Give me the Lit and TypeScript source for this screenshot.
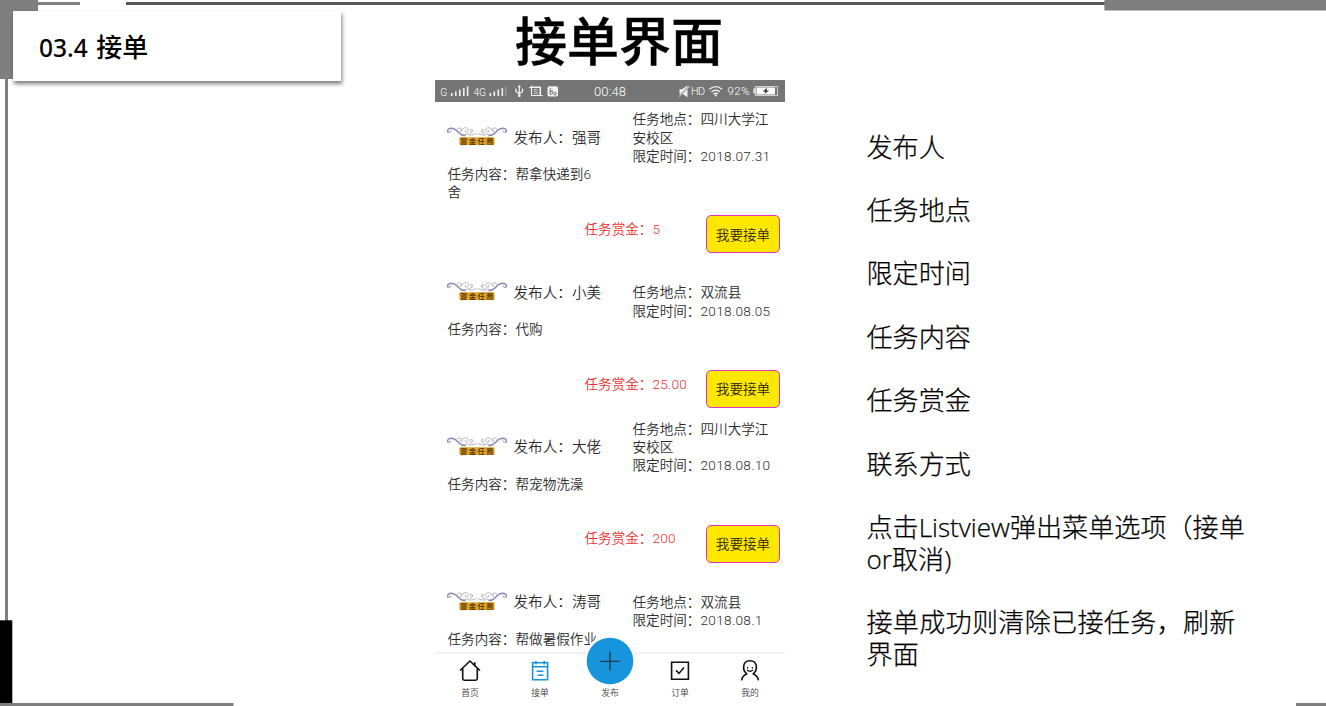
import { LitElement, html, css, svg } from "lit";
import { customElement, property } from "lit/decorators.js";

interface Task {
  publisher: string;
  place: string;
  deadline: string;
  content: string;
  reward: string;
}

const TASKS: Task[] = [
  { publisher: "强哥", place: "四川大学江安校区", deadline: "2018.07.31", content: "帮拿快递到6舍", reward: "5" },
  { publisher: "小美", place: "双流县", deadline: "2018.08.05", content: "代购", reward: "25.00" },
  { publisher: "大佬", place: "四川大学江安校区", deadline: "2018.08.10", content: "帮宠物洗澡", reward: "200" },
  { publisher: "涛哥", place: "双流县", deadline: "2018.08.1", content: "帮做暑假作业", reward: "" },
];

const NOTES = [
  "发布人",
  "任务地点",
  "限定时间",
  "任务内容",
  "任务赏金",
  "联系方式",
  "点击Listview弹出菜单选项（接单or取消)",
  "接单成功则清除已接任务，刷新界面",
];

@customElement("status-bar")
class StatusBar extends LitElement {
  static styles = css`
    :host { display: block; height: 22px; background: #757575; }
    svg { display: block; }
    text { font-family: Roboto, sans-serif; font-weight: 350; fill: #fff; }
  `;
  render() {
    return html`<svg width="350" height="22" viewBox="0 0 350 22">
      <text x="5.2" y="16" font-size="10.2">G</text>
      <g fill="#f0f0f0">
        <rect x="16" y="13" width="1.6" height="3" /><rect x="20" y="11.5" width="1.6" height="4.5" />
        <rect x="24" y="9.5" width="1.6" height="6.5" /><rect x="28" y="8" width="1.6" height="8" />
        <rect x="31.8" y="6.3" width="1.6" height="9.7" />
        <rect x="54.5" y="13" width="1.6" height="3" /><rect x="58.5" y="11.5" width="1.6" height="4.5" />
        <rect x="62.5" y="9.5" width="1.6" height="6.5" /><rect x="66.5" y="8" width="1.6" height="8" />
        <rect x="70.2" y="6.3" width="1.2" height="9.7" opacity=".35" />
      </g>
      <text x="38.5" y="16" font-size="10.2" textLength="12.6">4G</text>
      <g stroke="#f4f4f4" fill="none" stroke-width="1.2">
        <path d="M84.3 6V16M81 8.5v3.2l3.3 1.8 3.2-1.8V8.5" />
        <path d="M94 7.5h11.5v8M96.5 5.5v10h11M97 7h8v8" stroke-width="1.1" />
      </g>
      <circle cx="84.3" cy="15.7" r="1.4" fill="#f4f4f4" />
      <path d="M82.6 7.2l1.7-2.5 1.7 2.5z" fill="#f4f4f4" />
      <text x="98.6" y="13.8" font-size="7.5" font-weight="700">S</text>
      <rect x="112.5" y="6.3" width="10.5" height="10.3" rx="1.8" fill="#f4f4f4" />
      <path d="M115.3 7.7v4.5M117.2 9.7v2" stroke="#757575" stroke-width="1" />
      <g stroke="#757575" fill="none" stroke-width="1"><circle cx="116" cy="12.8" r="1.5" /><circle cx="120" cy="13.6" r="1.4" /></g>
      <text x="159" y="15.9" font-size="13" textLength="32">00:48</text>
      <path d="M244.5 9.2h2.5l5.5-3.6v11.6l-5-3.3h-3z" fill="#f0f0f0" />
      <path d="M243.5 17L255 5.4" stroke="#757575" stroke-width="1.6" />
      <path d="M244 16.5L254.5 6" stroke="#f4f4f4" stroke-width="1" />
      <text x="256" y="15.4" font-size="10.8" textLength="14">HD</text>
      <g fill="none" stroke="#f4f4f4" stroke-width="1.3">
        <path d="M274.3 9.3q6.4-5.2 12.8 0M276.5 11.8q4.2-3.5 8.4 0M278.4 14q2.3-1.8 4.6 0" />
      </g>
      <circle cx="280.7" cy="15.3" r="1.1" fill="#f4f4f4" />
      <text x="292.5" y="15.4" font-size="11.4" textLength="22">92%</text>
      <path d="M319.8 7.3q-3.2 3.7 0 7.4z" fill="#f4f4f4" />
      <rect x="320.5" y="6.5" width="22" height="9" fill="none" stroke="#cfcfcf" />
      <rect x="321.5" y="7.5" width="18.5" height="7" fill="#fff" />
      <path d="M332 7.8l-4.3 3.6h2.6l-.8 2.6 4.6-3.6h-2.7z" fill="#333" />
    </svg>`;
  }
}

@customElement("bounty-badge")
class BountyBadge extends LitElement {
  static styles = css`
    :host { display: block; width: 60px; height: 22px; }
    svg { display: block; }
    text { font-family: "Noto Sans CJK TC", sans-serif; font-weight: 500; fill: #56310a; }
  `;
  render() {
    const half = svg`
      <path d="M1 7.5Q-.2 3.5 4 3.2Q8 3.4 11.5 7.4Q14.5 10.5 18.5 10.8" fill="none" stroke="#8d87b8" stroke-width="1.5" />
      <path d="M1.3 7.3q2.6.7 2.8-1.7" fill="none" stroke="#9992bd" stroke-width="1" />
      <path d="M9 5.5q2-4 5-2.2q2.2 2.5-1 3.3M12 8q6-8 9-4.2q1.5 3.4-2.2 3.4q-1.8-1.7.4-2.4M17 9.5q6 .5 8.5-2.8q.6-2.8-1.6-2.4q-1.5 1.7.7 2.3M22 10.2q4-.2 7.5-1.6" fill="none" stroke="#b9b6bf" stroke-width=".95" />`;
    return html`<svg width="60" height="22" viewBox="0 0 60 22">
      ${half}
      <g transform="translate(60 0) scale(-1 1)">${half}</g>
      <rect x="12.3" y="12.3" width="35.2" height="7.6" rx=".8" fill="#dda523" />
      <text x="13" y="18.9" font-size="7.4" textLength="33.6">賞金任務</text>
    </svg>`;
  }
}

@customElement("task-row")
class TaskRow extends LitElement {
  @property({ attribute: false }) task!: Task;
  static styles = css`
    :host { display: block; height: 154.8px; box-sizing: border-box; padding: 8.4px 4px 0 12px; }
    .top { display: flex; height: 55px; }
    .badge { margin: 15.1px 0 0 0.4px; }
    .publisher { margin: 18.4px 0 0 6.1px; width: 119px; font-size: 14.6px; line-height: 18px; }
    .details { width: 143px; line-height: 18.2px; }
    .place { display: flex; flex-direction: column; justify-content: flex-end; height: 36.4px; }
    .num { letter-spacing: 0.32px; }
    .content { width: 150px; height: 36px; padding-left: 0.5px; line-height: 18px; }
    .actions { display: flex; justify-content: flex-end; margin-top: 13.7px; line-height: 18px; }
    .reward { width: 121.5px; padding-top: 4.7px; color: #ee3030; }
    .amount { letter-spacing: 0.2px; }
    button {
      box-sizing: border-box; width: 74px; height: 38px; padding: 1px 0 0; margin-right: 1px;
      border: 1.4px solid #e733c0; border-radius: 5px; background: #ffe800;
      font: inherit; color: #2b2610; white-space: nowrap;
    }
  `;
  render() {
    const t = this.task;
    return html`
      <div class="top">
        <bounty-badge class="badge"></bounty-badge>
        <div class="publisher">发布人：${t.publisher}</div>
        <div class="details">
          <div class="place"><span>任务地点：${t.place}</span></div>
          <div>限定时间：<span class="num">${t.deadline}</span></div>
        </div>
      </div>
      <div class="content">任务内容：${t.content}</div>
      ${t.reward
        ? html`<div class="actions">
            <div class="reward">任务赏金：<span class="amount">${t.reward}</span></div>
            <button>我要接单</button>
          </div>`
        : null}
    `;
  }
}

@customElement("tab-bar")
class TabBar extends LitElement {
  static styles = css`
    :host { display: grid; grid-template-columns: repeat(5, 70px); height: 53px; background: #fff; border-top: 1px solid #f0f0f0; box-shadow: 0 -1px 1px #f3f3f3; box-sizing: border-box; }
    .tab { display: flex; flex-direction: column; align-items: center; padding-top: 5px; font-size: 8.8px; line-height: 12px; color: #444; }
    svg { display: block; width: 24px; height: 24px; margin-bottom: 4.4px; fill: none; stroke: #111; stroke-width: 1.6; }
    .blue { stroke: #1795dc; }
    .plus { position: relative; }
    .fab { position: absolute; top: -21px; left: 8px; width: 54px; height: 54px; margin: 0; }
    .spacer { height: 28.4px; }
  `;
  render() {
    return html`
      <div class="tab">
        <svg viewBox="0 0 24 24"><path d="M2 11.5L12 2L16.8 6.6M22 11.5L16.8 6.6V3.3M4.7 9.5V19.6Q4.7 21.2 6.3 21.2H17.7Q19.3 21.2 19.3 19.6V9.5" /></svg>
        <span>首页</span>
      </div>
      <div class="tab">
        <svg class="blue" viewBox="0 0 24 24"><path d="M4.6 3.8H19.6V20.8H4.6zM4.6 7.8H19.6M8 2V5.5M16.2 2V5.5M8.6 12.2H15.5M9.6 16.2H15.5" /></svg>
        <span>接单</span>
      </div>
      <div class="tab plus">
        <svg class="fab" viewBox="0 0 54 54">
          <circle cx="27" cy="28" r="26" fill="#fff" stroke="none" />
          <circle cx="27" cy="28" r="23.3" fill="#1795dc" stroke="none" />
          <path d="M27 18.5v19M17.5 28.3h19" stroke="#263746" stroke-width="1.3" />
        </svg>
        <div class="spacer"></div>
        <span>发布</span>
      </div>
      <div class="tab">
        <svg viewBox="0 0 24 24"><path d="M3.6 3.2H20.4V20.2H3.6z" /><path d="M8 11.4L11 14.4L16 8.6" /></svg>
        <span>订单</span>
      </div>
      <div class="tab">
        <svg viewBox="0 0 24 24"><path d="M9.2 15.2L7.9 13.8Q5.4 12 5.6 8Q6 1.8 12 1.8Q18 1.8 18.4 8Q18.6 12 16.1 13.8L14.8 15.2M9.2 14.8Q4 16.8 3.6 21.4M14.8 14.8Q20 16.8 20.4 21.4" stroke-width="1.6" /><path d="M9 11Q12 13.6 15 11M9.6 8v1.5M14.4 8v1.5" stroke-width="1.2" /></svg>
        <span>我的</span>
      </div>
    `;
  }
}

@customElement("app-root")
class AppRoot extends LitElement {
  static styles = css`
    :host { display: grid; width: 1326px; height: 706px; overflow: hidden; background: #fff; color: #000; font-family: "Open Sans", "Noto Sans CJK SC", sans-serif; }
    .frame { grid-area: 1 / 1; display: block; }
    .slide { grid-area: 1 / 1; z-index: 1; display: grid; grid-template-columns: 435px 350px 541px; height: 706px; }
    .section { box-sizing: border-box; width: 328px; height: 70px; margin: 11px 0 0 13px; padding: 4px 0 0 26px; background: #fff; box-shadow: 1px 3px 4px rgba(0, 0, 0, 0.5); display: flex; align-items: baseline; font: 500 24.5px/64px "Noto Sans", "Noto Sans CJK SC", sans-serif; }
    .label { margin-left: 8.5px; font-size: 26px; }
    .phone-col { display: flex; flex-direction: column; height: 706px; }
    h1 { margin: 0 0 0 80px; height: 80px; font: 500 52px/78px "Noto Sans CJK SC", sans-serif; -webkit-text-stroke: 0.5px #000; white-space: nowrap; }
    .phone { display: flex; flex-direction: column; height: 626px; font: 350 13.6px/18px Roboto, "Noto Sans CJK SC", sans-serif; color: #2c2c2c; }
    .list { height: 551px; overflow: hidden; }
    .notes { padding: 131.6px 0 0 81.5px; width: 384px; font: 300 26.1px/31.7px "Open Sans", "Noto Sans CJK SC", sans-serif; -webkit-text-stroke: 0.25px #000; }
    .notes p { margin: 0 0 31.7px; }
    .notes p:last-child { letter-spacing: 0.28px; }
  `;
  render() {
    return html`
      <svg class="frame" width="1326" height="706" viewBox="0 0 1326 706">
        <rect x="5" y="78" width="3" height="543" fill="#7f7f7f" />
        <path d="M0 0H38V11H13V79H0z" fill="#7f7f7f" />
        <rect x="38" y="2" width="42" height="3" fill="#7f7f7f" />
        <rect x="126" y="2" width="979" height="3" fill="#595959" />
        <rect x="1104.4" y="0" width="222" height="10.5" fill="#7f7f7f" />
        <rect x="0" y="620.3" width="12.3" height="83" fill="#000" />
        <rect x="0" y="703" width="233.5" height="3" fill="#7f7f7f" />
        <rect x="1296" y="703" width="30" height="3" fill="#7f7f7f" />
      </svg>
      <div class="slide">
        <div class="section"><span>03.4</span><span class="label">接单</span></div>
        <div class="phone-col">
          <h1>接单界面</h1>
          <div class="phone">
            <status-bar></status-bar>
            <div class="list">${TASKS.map((t) => html`<task-row .task=${t}></task-row>`)}</div>
            <tab-bar></tab-bar>
          </div>
        </div>
        <div class="notes">${NOTES.map((n) => html`<p>${n}</p>`)}</div>
      </div>
    `;
  }
}
